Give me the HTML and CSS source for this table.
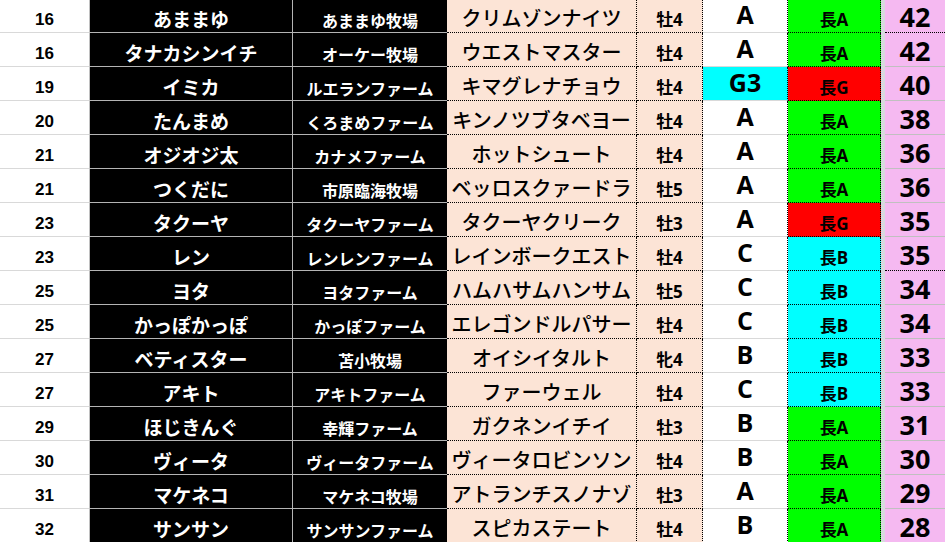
FILE: index.html
```html
<!DOCTYPE html>
<html lang="ja">
<head>
<meta charset="utf-8">
<title>ランキング</title>
<link rel="stylesheet" href="styles.css">
</head>
<body>
<div class="sheet">
  <div class="row"><div class="c rk">16</div><div class="c nm">あままゆ</div><div class="c fm">あままゆ牧場</div><div class="c hs">クリムゾンナイツ</div><div class="c sx">牡4</div><div class="c gr">A</div><div class="c ln la">長A</div><div class="c gap"></div><div class="c pt dot">42</div></div>
  <div class="row"><div class="c rk">16</div><div class="c nm">タナカシンイチ</div><div class="c fm">オーケー牧場</div><div class="c hs">ウエストマスター</div><div class="c sx">牡4</div><div class="c gr">A</div><div class="c ln la">長A</div><div class="c gap"></div><div class="c pt">42</div></div>
  <div class="row"><div class="c rk">19</div><div class="c nm">イミカ</div><div class="c fm">ルエランファーム</div><div class="c hs">キマグレナチョウ</div><div class="c sx">牡4</div><div class="c gr g3">G3</div><div class="c ln lg">長G</div><div class="c gap"></div><div class="c pt">40</div></div>
  <div class="row"><div class="c rk">20</div><div class="c nm">たんまめ</div><div class="c fm">くろまめファーム</div><div class="c hs">キンノツブタベヨー</div><div class="c sx">牡4</div><div class="c gr">A</div><div class="c ln la">長A</div><div class="c gap"></div><div class="c pt">38</div></div>
  <div class="row"><div class="c rk">21</div><div class="c nm">オジオジ太</div><div class="c fm">カナメファーム</div><div class="c hs">ホットシュート</div><div class="c sx">牡4</div><div class="c gr">A</div><div class="c ln la">長A</div><div class="c gap"></div><div class="c pt">36</div></div>
  <div class="row"><div class="c rk">21</div><div class="c nm">つくだに</div><div class="c fm">市原臨海牧場</div><div class="c hs">ベッロスクァードラ</div><div class="c sx">牡5</div><div class="c gr">A</div><div class="c ln la">長A</div><div class="c gap"></div><div class="c pt">36</div></div>
  <div class="row"><div class="c rk">23</div><div class="c nm">タクーヤ</div><div class="c fm">タクーヤファーム</div><div class="c hs">タクーヤクリーク</div><div class="c sx">牡3</div><div class="c gr">A</div><div class="c ln lg">長G</div><div class="c gap"></div><div class="c pt">35</div></div>
  <div class="row"><div class="c rk">23</div><div class="c nm">レン</div><div class="c fm">レンレンファーム</div><div class="c hs">レインボークエスト</div><div class="c sx">牡4</div><div class="c gr">C</div><div class="c ln lb">長B</div><div class="c gap"></div><div class="c pt dot">35</div></div>
  <div class="row"><div class="c rk">25</div><div class="c nm">ヨタ</div><div class="c fm">ヨタファーム</div><div class="c hs">ハムハサムハンサム</div><div class="c sx">牡5</div><div class="c gr">C</div><div class="c ln lb">長B</div><div class="c gap"></div><div class="c pt">34</div></div>
  <div class="row"><div class="c rk">25</div><div class="c nm">かっぽかっぽ</div><div class="c fm">かっぽファーム</div><div class="c hs">エレゴンドルパサー</div><div class="c sx">牡4</div><div class="c gr">C</div><div class="c ln lb">長B</div><div class="c gap"></div><div class="c pt">34</div></div>
  <div class="row"><div class="c rk">27</div><div class="c nm">ベティスター</div><div class="c fm">苫小牧場</div><div class="c hs">オイシイタルト</div><div class="c sx">牝4</div><div class="c gr">B</div><div class="c ln lb">長B</div><div class="c gap"></div><div class="c pt">33</div></div>
  <div class="row"><div class="c rk">27</div><div class="c nm">アキト</div><div class="c fm">アキトファーム</div><div class="c hs">ファーウェル</div><div class="c sx">牡4</div><div class="c gr">C</div><div class="c ln lb">長B</div><div class="c gap"></div><div class="c pt">33</div></div>
  <div class="row"><div class="c rk">29</div><div class="c nm">ほじきんぐ</div><div class="c fm">幸輝ファーム</div><div class="c hs">ガクネンイチイ</div><div class="c sx">牡3</div><div class="c gr">B</div><div class="c ln la">長A</div><div class="c gap"></div><div class="c pt">31</div></div>
  <div class="row"><div class="c rk">30</div><div class="c nm">ヴィータ</div><div class="c fm">ヴィータファーム</div><div class="c hs">ヴィータロビンソン</div><div class="c sx">牡4</div><div class="c gr">B</div><div class="c ln la">長A</div><div class="c gap"></div><div class="c pt">30</div></div>
  <div class="row"><div class="c rk">31</div><div class="c nm">マケネコ</div><div class="c fm">マケネコ牧場</div><div class="c hs">アトランチスノナゾ</div><div class="c sx">牡3</div><div class="c gr">A</div><div class="c ln la">長A</div><div class="c gap"></div><div class="c pt">29</div></div>
  <div class="row"><div class="c rk">32</div><div class="c nm">サンサン</div><div class="c fm">サンサンファーム</div><div class="c hs">スピカステート</div><div class="c sx">牡4</div><div class="c gr">B</div><div class="c ln la">長A</div><div class="c gap"></div><div class="c pt">28</div></div>
</div>
</body>
</html>
```

FILE: styles.css
```css
html, body {
  margin: 0;
  padding: 0;
  background: #ffffff;
  overflow: hidden;
}

.sheet {
  margin-top: -1px;
  font-family: "Open Sans", "Noto Sans CJK JP", sans-serif;
  color: #000;
}

.row {
  display: grid;
  grid-template-columns: 90px 203px 154px 190px 66px 85px 93px 4px 60px;
  height: 34px;
}

.c {
  box-sizing: border-box;
  display: flex;
  align-items: flex-end;
  justify-content: center;
  line-height: 1;
  white-space: nowrap;
  border-bottom: 1px solid #d9d9d9;
  font-weight: 700;
}

.rk {
  font-family: "Liberation Sans", Arial, sans-serif;
  font-size: 17px;
  padding-bottom: 4px;
  border-right: 1px solid #c0c0c0;
}

.nm {
  background: #000;
  color: #fff;
  font-family: "Noto Sans CJK JP", sans-serif;
  font-size: 19px;
  padding-bottom: 4px;
  border-bottom-color: #b4b4b4;
  border-right: 1px solid #b4b4b4;
}

.fm {
  background: #000;
  color: #fff;
  font-family: "Noto Sans CJK JP", sans-serif;
  font-size: 16px;
  padding-bottom: 4px;
  border-bottom-color: #b4b4b4;
}

.hs {
  background: #fce4d6;
  font-family: "Noto Sans CJK JP", sans-serif;
  font-weight: 500;
  font-size: 20px;
  padding-bottom: 4px;
  border-bottom: 1px dotted #000;
  border-right: 1px dotted #000;
}

.sx {
  background: #fce4d6;
  font-size: 17px;
  padding-bottom: 4px;
  border-bottom: 1px dotted #000;
  border-right: 1px dotted #000;
}

.gr {
  background: #ffffff;
  font-size: 25px;
  padding-bottom: 5px;
  border-right: 1px dotted #000;
}

.gr.g3 {
  background: #00ffff;
}

.ln {
  font-size: 17px;
  padding-bottom: 4px;
  border-bottom: 1px dotted #000;
  border-right: 1px dotted #000;
}

.la { background: #00ff00; }
.lg { background: #ff0000; }
.lb { background: #00ffff; }

.gap {
  background: #d9d9e0;
  border-bottom: none;
}

.pt {
  background: #f5b9f1;
  font-size: 27px;
  padding-bottom: 2px;
  border-bottom: 1px solid #c0c0c0;
}

.pt.dot {
  border-bottom: 1px dotted #000;
}
```
